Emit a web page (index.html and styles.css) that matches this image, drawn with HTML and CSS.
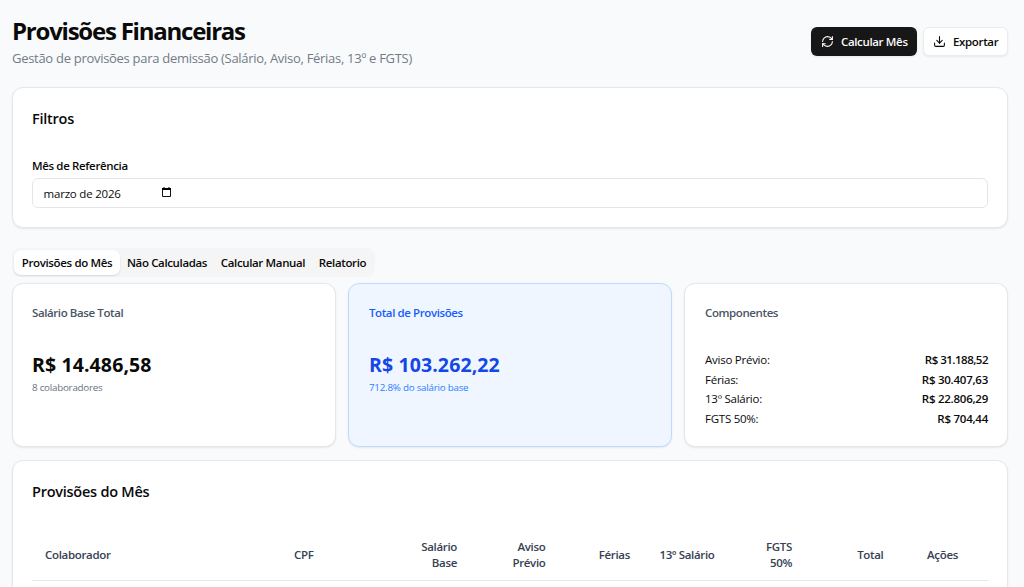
FILE: index.html
```html
<!DOCTYPE html>
<html lang="pt-BR">
<head>
<meta charset="utf-8">
<title>Provisões Financeiras</title>
<link rel="stylesheet" href="styles.css">
</head>
<body>
<main class="page">
  <header class="header">
    <div>
      <h1 class="title"><span>Provisões Financeiras</span></h1>
      <p class="subtitle"><span>Gestão de provisões para demissão (Salário, Aviso, Férias, 13º e FGTS)</span></p>
    </div>
    <div class="actions">
      <button class="btn btn-primary"><svg class="icon" viewBox="0 0 24 24"><path d="M3 12a9 9 0 0 1 9-9 9.75 9.75 0 0 1 6.74 2.74L21 8"/><path d="M21 3v5h-5"/><path d="M21 12a9 9 0 0 1-9 9 9.75 9.75 0 0 1-6.74-2.74L3 16"/><path d="M8 16H3v5"/></svg><span>Calcular Mês</span></button>
      <button class="btn btn-outline"><svg class="icon" viewBox="0 0 24 24"><path d="M21 15v4a2 2 0 0 1-2 2H5a2 2 0 0 1-2-2v-4"/><path d="m7 10 5 5 5-5"/><path d="M12 15V3"/></svg><span>Exportar</span></button>
    </div>
  </header>

  <section class="card filters">
    <h2 class="card-title"><span>Filtros</span></h2>
    <label class="label"><span>Mês de Referência</span></label>
    <div class="input"><span class="month">marzo de 2026</span><svg class="calendar" viewBox="0 0 10 10"><path class="calendar-frame" d="M.5 1.5h8v8h-8z"/><path class="calendar-top" d="M0 1h1.5V0h1v1h4V0h1v1H9v2H0z"/></svg></div>
  </section>

  <nav class="tabs">
    <button class="tab tab-active tab-a"><span>Provisões do Mês</span></button>
    <button class="tab tab-b"><span>Não Calculadas</span></button>
    <button class="tab tab-c"><span>Calcular Manual</span></button>
    <button class="tab tab-d"><span>Relatorio</span></button>
  </nav>

  <section class="stats">
    <article class="card stat">
      <h3 class="stat-title"><span>Salário Base Total</span></h3>
      <p class="stat-value"><span>R$ 14.486,58</span></p>
      <p class="stat-note"><span>8 colaboradores</span></p>
    </article>
    <article class="card stat stat-blue">
      <h3 class="stat-title"><span>Total de Provisões</span></h3>
      <p class="stat-value"><span>R$ 103.262,22</span></p>
      <p class="stat-note"><span>712.8% do salário base</span></p>
    </article>
    <article class="card stat">
      <h3 class="stat-title"><span>Componentes</span></h3>
      <dl class="components">
        <div class="row"><dt>Aviso Prévio:</dt><dd class="narrow">R$ 31.188,52</dd></div>
        <div class="row"><dt>Férias:</dt><dd>R$ 30.407,63</dd></div>
        <div class="row"><dt>13º Salário:</dt><dd>R$ 22.806,29</dd></div>
        <div class="row"><dt>FGTS 50%:</dt><dd>R$ 704,44</dd></div>
      </dl>
    </article>
  </section>

  <section class="card list">
    <h2 class="card-title"><span>Provisões do Mês</span></h2>
    <table class="table">
      <colgroup><col class="c1"><col class="c2"><col class="c3"><col class="c4"><col class="c5"><col class="c6"><col class="c7"><col class="c8"><col class="c9"></colgroup>
      <thead><tr>
        <th class="left">Colaborador</th><th class="left">CPF</th><th>Salário<br>Base</th><th>Aviso<br>Prévio</th><th>Férias</th><th>13º Salário</th><th>FGTS<br>50%</th><th>Total</th><th class="last">Ações</th>
      </tr></thead>
    </table>
  </section>
</main>
</body>
</html>
```
FILE: styles.css
```css
* { box-sizing: border-box; margin: 0; padding: 0; }
html { overflow: hidden; }
body {
  height: 587px;
  overflow: hidden;
  background: #f9fafb;
  color: #0a0a0a;
  font: 11.5px/16px "Open Sans", "Noto Sans", sans-serif;
  letter-spacing: -0.25px;
}
.page { height: 587px; overflow: hidden; padding: 16px 16px 0 12px; }
.header { display: flex; justify-content: space-between; height: 71px; }
.title { font-size: 24px; line-height: 30px; font-weight: 700; letter-spacing: -1.23px; }
.subtitle { font-size: 13px; line-height: 20px; color: #737b87; margin-top: 2px; letter-spacing: -0.29px; }
.actions { display: flex; gap: 6px; padding-top: 11px; }
.btn {
  display: flex; align-items: center; gap: 7px;
  height: 29px; padding: 0 9px;
  border: 1px solid transparent; border-radius: 6px;
  font: inherit; font-weight: 600; letter-spacing: -0.35px;
  white-space: nowrap;
  box-shadow: 0 1px 2px rgba(0, 0, 0, 0.08);
}
.btn span { padding-top: 1px; }
.btn-primary { width: 106px; background: #171717; color: #fafafa; }
.btn-outline { width: 85px; background: #fff; color: #0a0a0a; border-color: #ebecee; }
.icon { width: 13px; height: 13px; flex: none; fill: none; stroke: currentColor; stroke-width: 2; stroke-linecap: round; stroke-linejoin: round; }
.card {
  background: #fff;
  border: 1px solid #e5e7eb;
  border-radius: 11px;
  padding: 0 19px;
  box-shadow: 0 1px 2px rgba(0, 0, 0, 0.08);
}
.filters { height: 141px; padding-top: 21px; }
.card-title { font-size: 14.5px; line-height: 20px; font-weight: 600; letter-spacing: -0.25px; }
.label { display: block; margin-top: 29px; font-weight: 600; letter-spacing: -0.36px; }
.input {
  display: flex; align-items: center;
  height: 30px; margin-top: 4px; padding: 0 10.5px;
  border: 1px solid #e5e5e5; border-radius: 6px;
}
.month { width: 118.5px; padding-top: 1px; letter-spacing: -0.2px; }
.calendar { width: 10px; height: 10px; margin-top: -3px; }
.calendar-frame { fill: none; stroke: #111; }
.calendar-top { fill: #000; }
.tabs {
  display: flex; width: 363px; height: 29px; margin-top: 20px; padding: 2px;
  background: #f5f5f5; border-radius: 8px;
}
.tab {
  height: 25px; border: 0; border-radius: 7px; background: none; color: #0a0a0a;
  font: inherit; font-weight: 600; letter-spacing: -0.36px; white-space: nowrap; text-align: center;
}
.tab-active { background: #fff; box-shadow: 0 1px 2px rgba(0, 0, 0, 0.12); }
.tab-a { width: 106px; }
.tab-b { width: 94px; }
.tab-c { width: 98px; }
.tab-d { width: 61px; }
.stats { display: grid; grid-template-columns: repeat(3, 1fr); gap: 12px; margin-top: 6px; }
.stat { height: 164px; padding-top: 21px; }
.stat-title { font-size: 11.5px; line-height: 16px; font-weight: 600; color: #4a5565; letter-spacing: -0.4px; }
.stat-value { margin-top: 31px; font-size: 19.5px; line-height: 26px; font-weight: 700; letter-spacing: 0.11px; }
.stat-note { margin-top: 3px; font-size: 9.8px; line-height: 14px; color: #6a7282; letter-spacing: -0.24px; }
.stat-blue { padding-left: 20px; background: #eff6ff; border-color: #bedbff; }
.stat-blue .stat-title { color: #155dfc; }
.stat-blue .stat-value { color: #1447e6; }
.stat-blue .stat-note { color: #2b7fff; }
.stat:last-child { padding-left: 20px; }
.components { margin-top: 29px; }
.row { display: flex; justify-content: space-between; height: 19.7px; line-height: 20px; }
.row dd { font-weight: 600; letter-spacing: -0.25px; }
.row .narrow { letter-spacing: -0.5px; }
.list { height: 160px; margin-top: 13px; padding-top: 21px; }
.table { width: 956px; margin-top: 28px; table-layout: fixed; border-collapse: collapse; border-bottom: 1px solid #e5e7eb; }
.table th { height: 50px; padding: 0; text-align: right; vertical-align: middle; font-weight: 600; line-height: 16px; letter-spacing: -0.32px; color: #364153; white-space: nowrap; }
.table .left { text-align: left; }
.table .left:first-child { padding-left: 13px; }
.table .last { padding-right: 30px; }
.c1 { width: 262px; }
.c2 { width: 80px; }
.c3 { width: 83px; }
.c4 { width: 88.5px; }
.c5 { width: 84.5px; }
.c6 { width: 84.5px; }
.c7 { width: 77.5px; }
.c8 { width: 91.5px; }
.c9 { width: 104.5px; }
```
